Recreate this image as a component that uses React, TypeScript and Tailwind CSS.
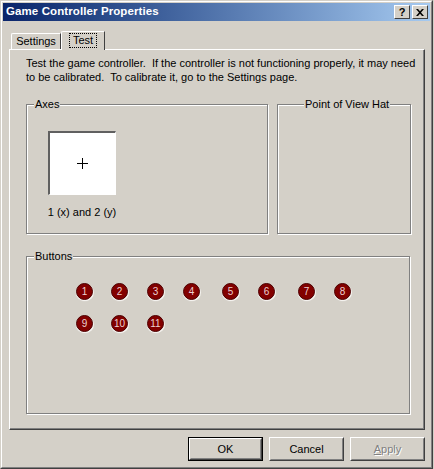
import React from "react";

const font = { fontFamily: '"Liberation Sans", Arial, sans-serif' };

function GroupBox({
  label,
  className,
  labelClass,
  children,
}: {
  label: string;
  className: string;
  labelClass: string;
  children?: React.ReactNode;
}) {
  return (
    <div
      className={`relative border border-[#808080] shadow-[inset_1px_1px_0_#ffffff,1px_1px_0_#ffffff] ${className}`}
    >
      <span
        className={`absolute -top-[8px] bg-[#d4d0c8] px-px text-[11px] leading-[14px] text-black ${labelClass}`}
      >
        {label}
      </span>
      {children}
    </div>
  );
}

function Circle({ n, ml }: { n: number; ml: string }) {
  return (
    <div
      className={`${ml} flex h-[17px] w-[17px] shrink-0 items-center justify-center rounded-full border border-[#4a0000] bg-[#820000] text-[10px] leading-none text-[#ecd0d0] shadow-[1px_1px_0_#f4f2ee,0_1px_1px_#ffffff]`}
    >
      {n}
    </div>
  );
}

function Btn({
  children,
  isDefault,
  disabled,
}: {
  children: React.ReactNode;
  isDefault?: boolean;
  disabled?: boolean;
}) {
  return (
    <div
      className={`h-[24px] w-[75px] ${isDefault ? "border border-black" : ""}`}
    >
      <div className="h-full w-full border border-t-white border-l-white border-r-[#404040] border-b-[#404040]">
        <div className="flex h-full w-full items-center justify-center border border-t-[#d4d0c8] border-l-[#d4d0c8] border-r-[#808080] border-b-[#808080] text-[11px]">
          {disabled ? (
            <span className="text-[#808080] [text-shadow:1px_1px_0_#ffffff]">
              <span className="underline">A</span>pply
            </span>
          ) : (
            children
          )}
        </div>
      </div>
    </div>
  );
}

export default function App() {
  return (
    <div className="h-[469px] w-[434px] bg-[#d4d0c8]" style={font}>
      <div className="h-[469px] w-[433px] border border-t-[#d4d0c8] border-l-[#d4d0c8] border-r-[#404040] border-b-[#404040]">
        <div className="flex h-full flex-col border border-t-white border-l-white border-r-[#808080] border-b-[#808080] p-px">
          {/* Title bar */}
          <div className="flex h-[18px] items-center justify-between bg-gradient-to-r from-[#0a246a] to-[#a6caf0] pl-[3px] pr-[2px]">
            <span className="text-[11.5px] font-bold tracking-[0.1px] text-white">
              Game Controller Properties
            </span>
            <div className="flex gap-[2px]">
              <div className="flex h-[14px] w-[16px] items-center justify-center border border-t-white border-l-white border-r-[#404040] border-b-[#404040] bg-[#d4d0c8] text-[11px] font-bold leading-none text-black">
                ?
              </div>
              <div className="flex h-[14px] w-[16px] items-center justify-center border border-t-white border-l-white border-r-[#404040] border-b-[#404040] bg-[#d4d0c8]">
                <svg width="8" height="7" viewBox="0 0 8 7">
                  <path
                    d="M0 0h2l2 2.3L6 0h2L5 3.5 8 7H6L4 4.7 2 7H0l3-3.5z"
                    fill="#000"
                  />
                </svg>
              </div>
            </div>
          </div>

          {/* Tabs */}
          <div className="mt-[10px] flex h-[18px] items-end pl-[8px]">
            <div className="flex h-[16px] w-[50px] items-center justify-center rounded-tl-[2px] border-l border-t border-l-white border-t-white border-r border-r-[#404040] text-[11px]">
              Settings
            </div>
            <div className="relative z-10 flex h-[19px] w-[44px] -mb-px items-start justify-center rounded-tl-[2px] border-l border-t border-l-white border-t-white border-r border-r-[#404040] bg-[#d4d0c8] pt-px text-[11px]">
              <span className="border border-dotted border-black px-[3px] leading-[13px]">
                Test
              </span>
            </div>
          </div>

          {/* Panel */}
          <div className="ml-[6px] h-[381px] w-[416px] border border-t-white border-l-white border-r-[#404040] border-b-[#404040]">
            <div className="h-full w-full border-r border-b border-r-[#808080] border-b-[#808080] pl-[16px] pt-[6px]">
              <p className="text-[11px] leading-[14px] text-black whitespace-nowrap">
                Test the game controller.&nbsp; If the controller is not
                functioning properly, it may need
                <br />
                to be calibrated.&nbsp; To calibrate it, go to the Settings
                page.
              </p>

              <div className="mt-[20px] flex gap-[9px]">
                <GroupBox
                  label="Axes"
                  className="h-[130px] w-[242px]"
                  labelClass="left-[7px]"
                >
                  <div className="ml-[21px] mt-[26px] flex w-[68px] flex-col items-center">
                    <div className="flex h-[64px] w-[68px] items-center justify-center border-t-2 border-l-2 border-t-[#606060] border-l-[#606060] border-r border-b border-r-white border-b-white bg-white">
                      <svg width="11" height="11" viewBox="0 0 11 11">
                        <path d="M5.5 0v11M0 5.5h11" stroke="#000" strokeWidth="1" />
                      </svg>
                    </div>
                    <span className="mt-[10px] text-[11px] leading-[14px] whitespace-nowrap">
                      1 (x) and 2 (y)
                    </span>
                  </div>
                </GroupBox>
                <GroupBox
                  label="Point of View Hat"
                  className="h-[130px] w-[134px]"
                  labelClass="left-[26px]"
                />
              </div>

              <div className="mt-[22px]">
                <GroupBox
                  label="Buttons"
                  className="h-[158px] w-[384px]"
                  labelClass="left-[7px]"
                >
                  <div className="mt-[26px] flex">
                    <Circle n={1} ml="ml-[49px]" />
                    <Circle n={2} ml="ml-[18px]" />
                    <Circle n={3} ml="ml-[19px]" />
                    <Circle n={4} ml="ml-[19px]" />
                    <Circle n={5} ml="ml-[22px]" />
                    <Circle n={6} ml="ml-[19px]" />
                    <Circle n={7} ml="ml-[23px]" />
                    <Circle n={8} ml="ml-[19px]" />
                  </div>
                  <div className="mt-[15px] flex">
                    <Circle n={9} ml="ml-[49px]" />
                    <Circle n={10} ml="ml-[18px]" />
                    <Circle n={11} ml="ml-[19px]" />
                  </div>
                </GroupBox>
              </div>
            </div>
          </div>

          {/* Bottom buttons */}
          <div className="mt-[7px] flex gap-[6px] pl-[185px]">
            <Btn isDefault>OK</Btn>
            <Btn>Cancel</Btn>
            <Btn disabled>Apply</Btn>
          </div>
        </div>
      </div>
    </div>
  );
}
